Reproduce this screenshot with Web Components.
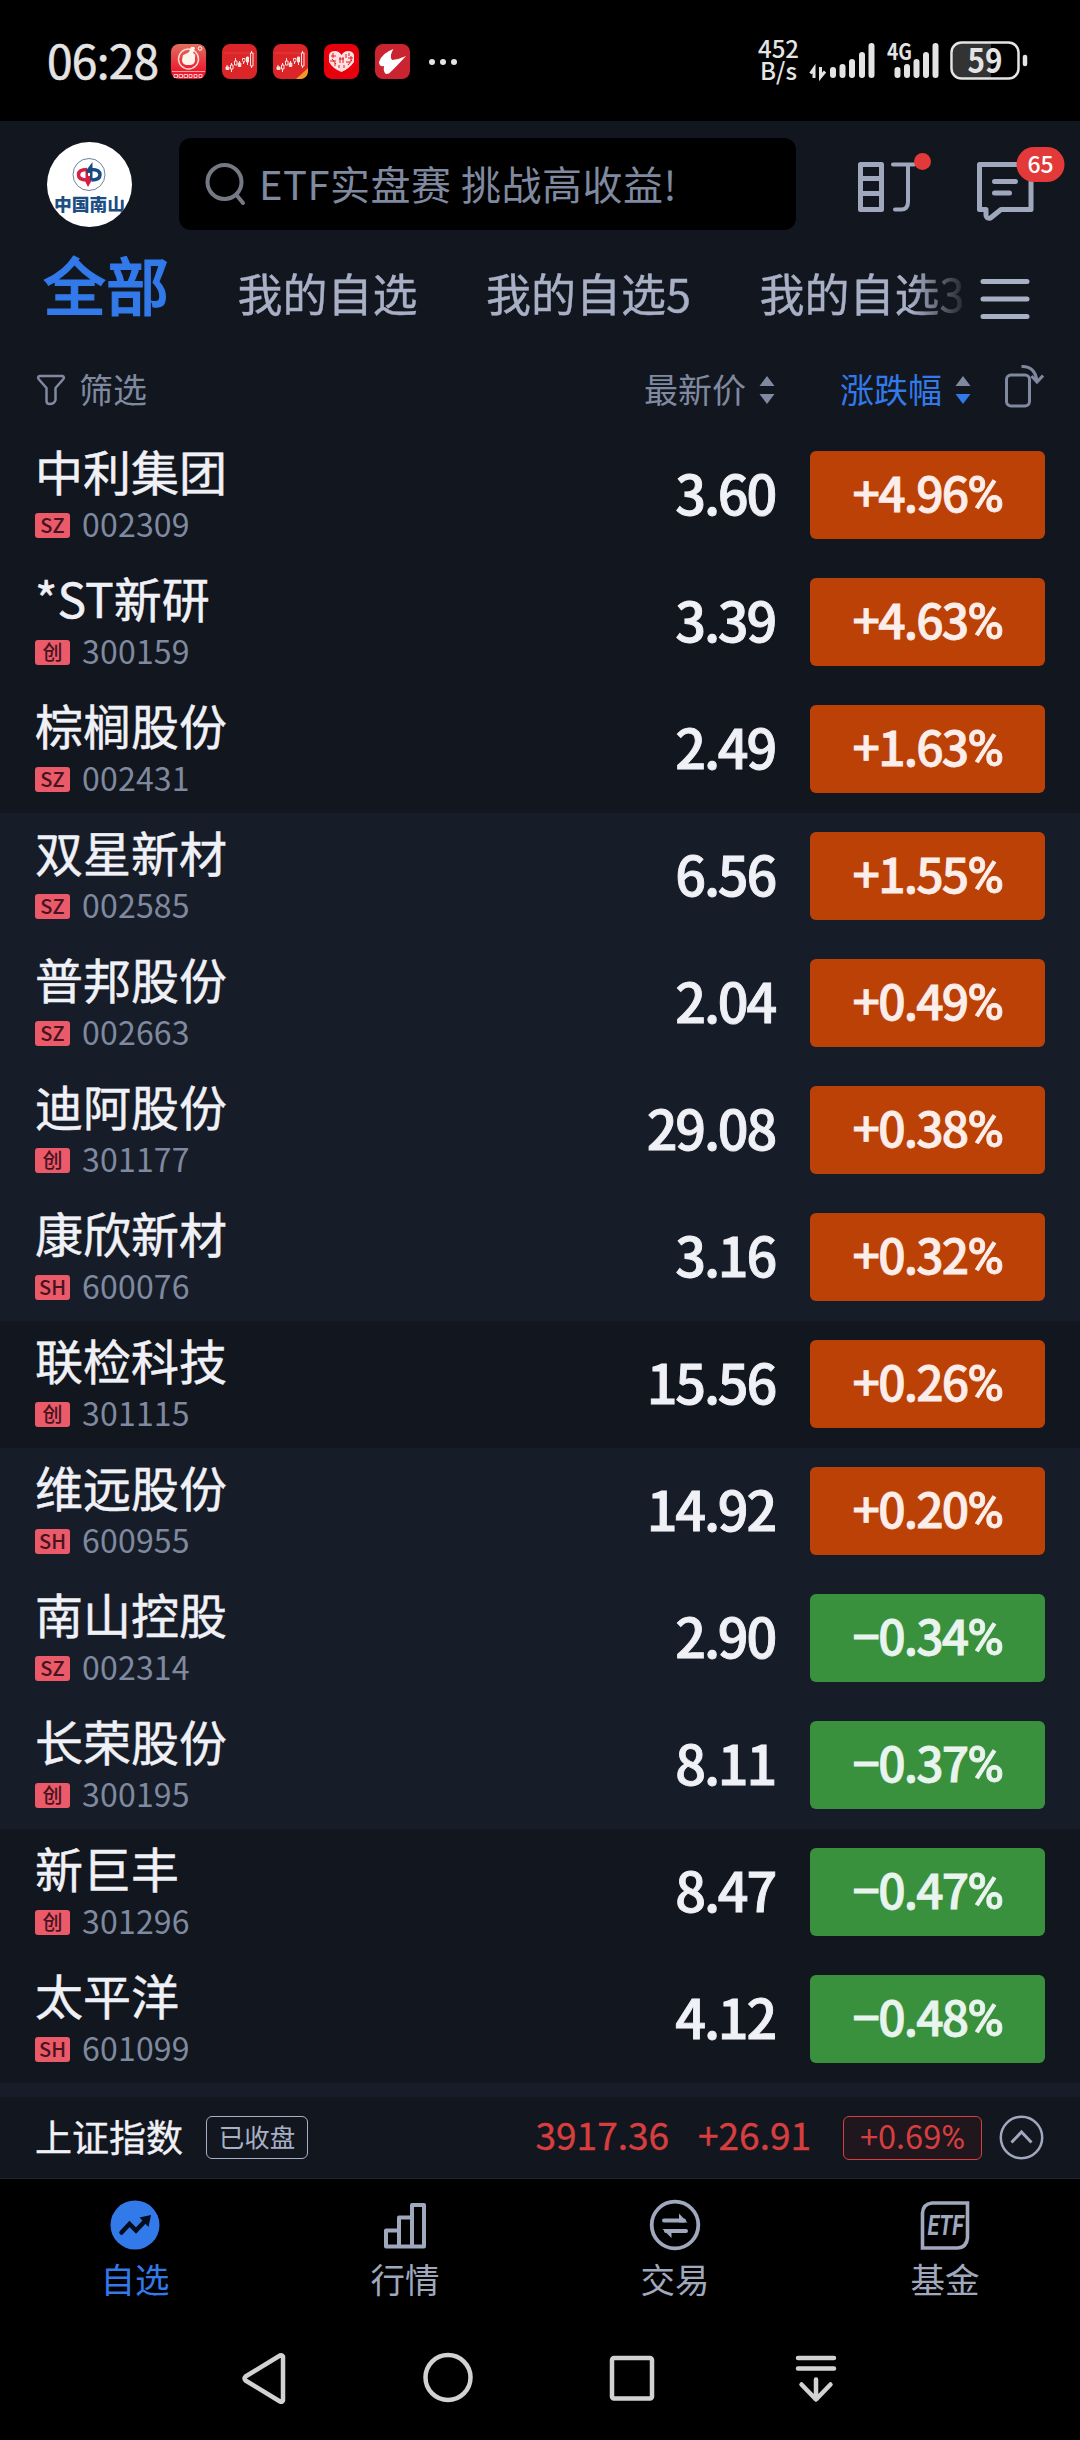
<!DOCTYPE html>
<html lang="zh-CN">
<head>
<meta charset="utf-8">
<title>自选</title>
<style>
  body {
    margin: 0;
    background: #000;
    font-family: "Noto Sans CJK SC", "Noto Sans", sans-serif;
  }
</style>
</head>
<body>
<watch-app></watch-app>

<script>
// attaches an open shadow root and fills it with the given markup
class BaseElement extends HTMLElement {
  constructor() {
    super();
    this.attachShadow({ mode: "open" });
  }

  connectedCallback() {
    const template = document.createElement("template");
    template.innerHTML = this.markup();
    this.shadowRoot.append(template.content.cloneNode(true));
  }
}

/* ---------- system status bar ---------- */
class StatusBar extends BaseElement {
  markup() {
    return `
      <style>
        :host {
          display: flex;
          align-items: flex-start;
          box-sizing: border-box;
          height: 121px;
          padding-left: 47px;
          background: #000;
          color: #e4e4e4;
        }
        .time {
          width: 124px;
          font-size: 46px;
          line-height: 46px;
          margin-top: 36px;
          letter-spacing: -0.7px;
          -webkit-text-stroke: 0.6px currentColor;
          white-space: nowrap;
        }
        .apps { margin-top: 43px; }
        .speed {
          margin: 37px 0 0 299px;
          width: 41px;
          font-size: 24px;
          line-height: 22px;
          text-align: center;
          font-weight: 500;
          white-space: nowrap;
        }
        .radio { margin: 36px 0 0 10px; overflow: visible; }
        svg { display: block; flex: none; }
        text { font-family: inherit; }
      </style>
      <div class="time">06:28</div>
      <svg class="apps" width="288" height="38" viewBox="0 0 288 38">
        <defs>
          <linearGradient id="thumb" x1="0" y1="0" x2="0" y2="1">
            <stop offset="0" stop-color="#e0705e"/><stop offset=".75" stop-color="#ee1c30"/>
          </linearGradient>
          <g id="candles" stroke="#f6e4e2" stroke-width="1" fill="none">
            <path d="M5 22v2M9.500 20v2M9.500 26v3M13.500 15v3M17.500 18v2M21.500 19v2M25.500 19v3M29.500 8v2M29.500 23v2"/>
            <path d="M8.500 22h2.500v4H8.500zM12.500 18h2.500v4h-2.500zM20.500 15.500h2.500v2l-1.200 2-1.300-2zM28.500 10h2.500v13h-2.500z"/>
            <path d="M4 24h3v2.500H4zM16.300 20h2.500v3.500h-2.500zM24.500 14h2v5h-2z" fill="#f6e4e2"/>
          </g>
        </defs>
        <rect x="0" y="1" width="35" height="35" rx="8" fill="url(#thumb)"/>
        <circle cx="17.500" cy="16" r="10" fill="none" stroke="#fbd9d0" stroke-width="1.500"/>
        <path d="M12 12q3-1 6-3l2-5q3-1 4 1l-2 5q3 1 2 4v4q-1 4-5 4h-4q-4-1-4-5z" fill="#fff4ec"/>
        <circle cx="29" cy="5.500" r="1.800" fill="none" stroke="#fff"/>
        <path d="M1 28.500h33" stroke="#fbc4bd" stroke-width=".8"/>
        <path d="M3 31.500h3.500v3H3zM8 31.500h3.500v3H8zM13 31.500h3.500v3H13zM18 31.500h3v3h-3zM23 31.500h3v3h-3zM28 31.500h3v3h-3z" fill="none" stroke="#ffd5d0" stroke-width=".9"/>
        <g transform="translate(51)"><rect y="1" width="35" height="35" rx="8" fill="#dc2528"/><path d="M2 10h31" stroke="#e65552" stroke-width=".6"/><use href="#candles"/></g>
        <g transform="translate(102)"><rect y="1" width="35" height="35" rx="8" fill="#dc2528"/><path d="M2 10h31" stroke="#e65552" stroke-width=".6"/><use href="#candles"/><path d="M35 25v4q-1 6-7 7h-5z" fill="#f29a22"/></g>
        <g transform="translate(153)">
          <rect y="1" width="35" height="35" rx="8" fill="#e8000d"/>
          <path d="M5 12q1-4 6-4 4 0 6.500 4Q20 8 24 8q5 0 6 4v7q-5 7-12.500 10Q9 26 5 19z" fill="#ffe2e1"/>
          <path d="M7 13h5M9 10v5M6 18h6M15 16h5M16 14v6M19 14v6M22 11v4M25 10v3M24 15h5M27 13v5M22 19h4M11 20v3M15 22v3M20 22v3M8 16l4 5M28 17l-4 5" stroke="#e8000d" stroke-width=".9"/>
        </g>
        <g transform="translate(204)">
          <rect y="1" width="35" height="35" rx="8" fill="#c9242f"/>
          <path d="M18.500 6Q7 10 4 19q0 5 5 4-1 6 2 8l3-.500Q20 25 31 13q-6 3-14 4-3-4 1.500-11z" fill="#fff"/>
        </g>
        <g fill="#e4e4e4"><circle cx="261" cy="19" r="3"/><circle cx="272" cy="19" r="3"/><circle cx="283" cy="19" r="3"/></g>
      </svg>
      <div class="speed">452<br>B/s</div>
      <svg class="radio" width="222" height="50" viewBox="0 0 222 50">
        <path d="M5 42V32.500L1.500 37.500M11.500 31v10l4.500-5.500" fill="none" stroke="#e4e4e4" stroke-width="3"/>
        <g stroke="#e4e4e4" stroke-width="6" stroke-linecap="round">
          <path d="M24 34v5M33.500 31v8M43 26v13M53 19v20M62.500 10v29"/>
          <path d="M88.500 34v5M98 31v8M107.500 26v13M117 19v20M126.500 10v29"/>
        </g>
        <text x="78" y="24" font-size="22.500" font-weight="700" fill="#e4e4e4" textLength="25" lengthAdjust="spacingAndGlyphs">4G</text>
        <path d="M153 7h29v35h-29q-9-1-9-9V16q0-8 9-9z" fill="#333"/>
        <rect x="142.500" y="6.500" width="67" height="36" rx="10" fill="none" stroke="#e4e4e4" stroke-width="2.500"/>
        <path d="M216 21v7" stroke="#e4e4e4" stroke-width="4.500" stroke-linecap="round"/>
        <text x="176" y="37" font-size="33" font-weight="700" fill="#e4e4e4" text-anchor="middle" textLength="35" lengthAdjust="spacingAndGlyphs">59</text>
      </svg>
    `;
  }
}
customElements.define("status-bar", StatusBar);

/* ---------- avatar, search field, shortcuts ---------- */
class SearchHeader extends BaseElement {
  markup() {
    return `
      <style>
        :host {
          display: flex;
          align-items: center;
          box-sizing: border-box;
          height: 126px;
          padding: 0 15px 0 47px;
        }
        .avatar { flex: none; width: 85px; height: 85px; margin-right: 47px; }
        .search {
          display: flex;
          align-items: center;
          width: 617px;
          height: 92px;
          border-radius: 12px;
          background: #000;
          color: #7f899f;
          font-size: 40px;
          letter-spacing: 0.5px;
          white-space: nowrap;
        }
        .search svg { margin: 0 13px 0 26px; }
        .search span { margin-top: -3px; }
        .watch { margin-left: 60px; }
        .message { margin-left: 43px; }
        svg { display: block; flex: none; }
      </style>
      <svg class="avatar" viewBox="0 0 85 85">
        <defs><clipPath id="round"><circle cx="42.500" cy="42.500" r="42.500"/></clipPath></defs>
        <g clip-path="url(#round)">
          <rect width="85" height="85" fill="#fff"/>
          <circle cx="42" cy="32.500" r="16" fill="none" stroke="#5d7391" stroke-width=".9"/>
          <path d="M40 27.500q-8.500 0-8.500 5.200t8.500 5.300" fill="none" stroke="#d71f45" stroke-width="3.500"/>
          <path d="M38.500 27h2.500v7h4v4l-4 7-2.500-5z" fill="#d71f45"/>
          <path d="M44.500 27.500q8.500 0 8.500 5.200T44.500 38" fill="none" stroke="#174b83" stroke-width="3.500"/>
          <path d="M45.500 38H43v-7h-3.500v-3l6-8z" fill="#174b83"/>
          <text x="42.500" y="68.500" font-size="17" font-weight="900" fill="#1c4e83" text-anchor="middle" textLength="71" lengthAdjust="spacingAndGlyphs">中国南山</text>
        </g>
      </svg>
      <div class="search">
        <svg width="41" height="44" viewBox="0 0 41 44" fill="none" stroke="#747983" stroke-width="4" stroke-linecap="round">
          <circle cx="19.500" cy="20" r="17"/><path d="M31.500 33l6.500 8"/>
        </svg>
        <span>ETF实盘赛 挑战高收益!</span>
      </div>
      <svg class="watch" width="76" height="76" viewBox="0 0 76 76">
        <g fill="none" stroke="#a0a8bd" stroke-width="5" stroke-linejoin="round" stroke-linecap="round">
          <path d="M4.500 18.500h21v45h-21zM4.500 32.500h21M4.500 47.500h21"/>
          <path d="M37 18.500h21M52 18.500V56q0 7.500-7 7.500h-6" stroke-width="4"/>
        </g>
        <circle cx="66.500" cy="15.500" r="8.500" fill="#e43939"/>
      </svg>
      <svg class="message" width="90" height="84" viewBox="0 0 90 84">
        <path d="M4.500 22.500h51.500v45H26L15.500 76q-5 1-4.500-4v-4.500H4.500z" fill="none" stroke="#a0a8bd" stroke-width="5" stroke-linejoin="round"/>
        <path d="M19.500 39.500h21M19.500 51h15" stroke="#a0a8bd" stroke-width="5" stroke-linecap="round"/>
        <rect x="41.500" y="5" width="48" height="35" rx="17.500" fill="#e43939"/>
        <text x="65.500" y="30.500" font-size="23" font-weight="500" fill="#fff" text-anchor="middle">65</text>
      </svg>
    `;
  }
}
customElements.define("search-header", SearchHeader);

/* ---------- watchlist groups ---------- */
class GroupTabs extends BaseElement {
  markup() {
    return `
      <style>
        :host {
          display: flex;
          align-items: center;
          height: 94px;
          padding-left: 43px;
          color: #a8b0c6;
        }
        .scroll {
          display: flex;
          align-items: center;
          gap: 68.500px;
          width: 921px;
          height: 94px;
          overflow: hidden;
          white-space: nowrap;
          font-size: 45px;
          line-height: 60px;
          -webkit-text-stroke: 0.4px currentColor;
          -webkit-mask-image: linear-gradient(90deg, #000 868px, transparent 928px);
          mask-image: linear-gradient(90deg, #000 868px, transparent 928px);
        }
        .scroll span { margin-top: -3px; }
        .scroll .active {
          color: #3279e9;
          font-size: 63px;
          font-weight: 500;
          -webkit-text-stroke: 1.2px currentColor;
          margin-top: -22px;
        }
        .menu { margin: 9px 0 0 15px; flex: none; }
      </style>
      <div class="scroll">
        <span class="active">全部</span>
        <span>我的自选</span>
        <span>我的自选5</span>
        <span>我的自选3</span>
      </div>
      <svg class="menu" width="52" height="42" viewBox="0 0 52 42" stroke="#a8b0c6" stroke-width="5" stroke-linecap="round">
        <path d="M4 3.500h44M4 21h44M4 38.500h44"/>
      </svg>
    `;
  }
}
customElements.define("group-tabs", GroupTabs);

/* ---------- column heads with sort arrows ---------- */
class SortLabel extends BaseElement {
  markup() {
    const active = this.hasAttribute("active");
    return `
      <style>
        :host {
          display: flex;
          align-items: center;
          gap: 13px;
          color: ${active ? "#3279e9" : "#7f899f"};
          font-size: 34px;
          white-space: nowrap;
        }
        span { margin-top: 4px; }
        svg { margin-top: 6px; }
      </style>
      <span><slot></slot></span>
      <svg width="16" height="28" viewBox="0 0 16 28">
        <path d="M8 0l7.500 10H.5z" fill="#7f899f"/>
        <path d="M8 28l7.500-10H.5z" fill="${active ? "#3279e9" : "#7f899f"}"/>
      </svg>
    `;
  }
}
customElements.define("sort-label", SortLabel);

class SortBar extends BaseElement {
  markup() {
    return `
      <style>
        :host {
          display: flex;
          align-items: center;
          box-sizing: border-box;
          height: 91px;
          padding: 0 36px;
          color: #7f899f;
          font-size: 34px;
          line-height: 50px;
        }
        .filter { display: flex; align-items: center; gap: 13px; flex: 1; }
        .filter svg { margin-top: 7px; }
        .filter span { margin-top: 4px; }
        .change { margin-left: 65px; }
        .rotate { margin: -2px 0 0 32px; }
      </style>
      <div class="filter">
        <svg width="30" height="32" viewBox="0 0 30 32" fill="none" stroke="#7f899f" stroke-width="2.500" stroke-linejoin="round">
          <path d="M3.500 2h23q2.500 1 .5 3.500L19.500 14v12q-1 4-6 4-3 0-3-3V14L3 5.500Q1 3 3.500 2z"/>
        </svg>
        <span>筛选</span>
      </div>
      <sort-label>最新价</sort-label>
      <sort-label class="change" active>涨跌幅</sort-label>
      <svg class="rotate" width="41" height="44" viewBox="0 0 41 44" fill="none" stroke="#7f899f" stroke-width="3">
        <rect x="3.500" y="11" width="23" height="31" rx="4.500"/>
        <path d="M18.500 2.500Q32 2 34 17M28.500 12l5.500 6 6-6.500"/>
      </svg>
    `;
  }
}
customElements.define("sort-bar", SortBar);

/* ---------- one quote ---------- */
class StockRow extends BaseElement {
  markup() {
    const { market, code, price, change } = this.dataset;
    const down = change.startsWith("−");
    return `
      <style>
        :host {
          display: grid;
          grid-template-columns: 1fr auto 235px;
          align-items: start;
          box-sizing: border-box;
          height: 127px;
          padding: 19px 35px 0;
          background: #12161e;
          color: #f0f1f6;
        }
        :host([raised]) { background: #171d28; }
        .name {
          font-size: 48px;
          line-height: 48px;
          margin-top: -5px;
          -webkit-text-stroke: 0.5px currentColor;
        }
        .sub {
          display: flex;
          align-items: center;
          gap: 12px;
          margin-top: 19px;
          height: 25px;
        }
        .market {
          width: 35px;
          height: 25px;
          border-radius: 3px;
          background: #ea5a69;
          color: #46131f;
          font-size: 20px;
          line-height: 23px;
          font-weight: 500;
          text-align: center;
        }
        .code {
          color: #7f899f;
          font-size: 32px;
          line-height: 25px;
          margin-top: -5px;
          letter-spacing: 0.2px;
        }
        .price {
          font-size: 54px;
          line-height: 88px;
          font-weight: 500;
          letter-spacing: -2.200px;
          -webkit-text-stroke: 0.9px currentColor;
          margin: -3px 35px 0 0;
        }
        .change {
          height: 88px;
          border-radius: 6px;
          background: ${down ? "#39903d" : "#bb4106"};
          color: ${down ? "#eaf4ee" : "#fbeeea"};
          font-size: 48px;
          line-height: 80px;
          font-weight: 500;
          letter-spacing: -1.800px;
          -webkit-text-stroke: 0.8px currentColor;
          text-align: center;
        }
        /* Roboto has the narrower percent sign */
        .unit { font-family: Roboto, sans-serif; font-size: 50px; line-height: 1; }
      </style>
      <div>
        <div class="name"><slot></slot></div>
        <div class="sub">
          <span class="market">${market}</span>
          <span class="code">${code}</span>
        </div>
      </div>
      <div class="price">${price}</div>
      <div class="change">${change}<span class="unit">%</span></div>
    `;
  }
}
customElements.define("stock-row", StockRow);

/* ---------- index summary ---------- */
class IndexBar extends BaseElement {
  markup() {
    return `
      <style>
        :host {
          display: flex;
          align-items: center;
          box-sizing: border-box;
          height: 82px;
          padding: 0 36px 0 35px;
          border-bottom: 1px solid #22262e;
          background: #12161e;
          color: #f0f1f6;
          font-size: 37px;
          line-height: 42px;
          white-space: nowrap;
        }
        .name {
          width: 171px;
          margin-top: -3px;
          -webkit-text-stroke: 0.4px currentColor;
        }
        .state {
          box-sizing: border-box;
          width: 102px;
          height: 43px;
          border: 1px solid #a8b0c6;
          border-radius: 6px;
          color: #a8b0c6;
          font-size: 25.500px;
          line-height: 38px;
          text-align: center;
        }
        .value, .diff {
          color: #d83e3e;
          -webkit-text-stroke: 0.4px currentColor;
        }
        .value { margin: -7px 0 0 auto; }
        .diff { margin: -7px 0 0 29px; }
        .rate {
          box-sizing: border-box;
          width: 139px;
          height: 44px;
          margin: 0 17px 0 32px;
          border: 1px solid #d83e3e;
          border-radius: 6px;
          background: #20171e;
          color: #d83e3e;
          font-size: 32.500px;
          line-height: 36px;
          text-align: center;
        }
        .unit { font-family: Roboto, sans-serif; }
        svg { flex: none; }
      </style>
      <span class="name">上证指数</span>
      <span class="state">已收盘</span>
      <span class="value">3917.36</span>
      <span class="diff">+26.91</span>
      <span class="rate">+0.69<span class="unit">%</span></span>
      <svg width="45" height="45" viewBox="0 0 45 45" fill="none" stroke="#a0a8bd" stroke-width="2.500">
        <circle cx="22.500" cy="22.500" r="20.700"/>
        <path d="M12.500 27.500l10-10.500 10 10.500" stroke-width="3"/>
      </svg>
    `;
  }
}
customElements.define("index-bar", IndexBar);

/* ---------- app tab bar ---------- */
class TabItem extends BaseElement {
  markup() {
    return `
      <style>
        :host {
          flex: 1;
          display: flex;
          flex-direction: column;
          align-items: center;
          padding-top: 20px;
          color: #a0a8bd;
          font-size: 34.500px;
          line-height: 50px;
        }
        :host([active]) { color: #3279e9; }
        .label { margin-top: 2px; }
        ::slotted(svg) { display: block; }
      </style>
      <slot name="icon"></slot>
      <span class="label"><slot></slot></span>
    `;
  }
}
customElements.define("tab-item", TabItem);

class TabBar extends BaseElement {
  markup() {
    return `
      <style>
        :host { display: flex; height: 146px; background: #000; }
      </style>
      <tab-item active>
        <svg slot="icon" width="52" height="52" viewBox="0 0 52 52">
          <circle cx="26" cy="26" r="24.500" fill="#3279e9"/>
          <path d="M12.500 33.500l8-8.500 6.500 6.500L37 21" fill="none" stroke="#050c1c" stroke-width="4.500" stroke-linecap="round"/>
          <path d="M30.500 18.500L42 16l-2.500 12z" fill="#050c1c"/>
        </svg>自选
      </tab-item>
      <tab-item>
        <svg slot="icon" width="52" height="52" viewBox="0 0 52 52" fill="none" stroke="#a0a8bd" stroke-width="4" stroke-linejoin="round">
          <path d="M7 47.500V31.500h13V18.500h13V6h12v41.500zM20 31.500v16M33 18.500v29"/>
        </svg>行情
      </tab-item>
      <tab-item>
        <svg slot="icon" width="52" height="52" viewBox="0 0 52 52">
          <circle cx="26" cy="26" r="23.300" fill="none" stroke="#a0a8bd" stroke-width="3.800"/>
          <path d="M15 21.500h20M17 32h20" stroke="#a0a8bd" stroke-width="4" stroke-linecap="round"/>
          <path d="M30 14.500l8.500 9H30zM22.500 39L13.500 30h9z" fill="#a0a8bd"/>
        </svg>交易
      </tab-item>
      <tab-item>
        <svg slot="icon" width="52" height="52" viewBox="0 0 52 52">
          <path d="M13 4h35.500v35q-1 9.500-10 10H3.500V14Q4 5 13 4z" fill="none" stroke="#a0a8bd" stroke-width="3.600"/>
          <text x="26.500" y="36" font-size="27" font-family="Roboto, sans-serif" font-weight="700" font-style="italic" fill="#a0a8bd" text-anchor="middle" textLength="36" lengthAdjust="spacingAndGlyphs">ETF</text>
        </svg>基金
      </tab-item>
    `;
  }
}
customElements.define("tab-bar", TabBar);

/* ---------- system navigation keys ---------- */
class NavKeys extends BaseElement {
  markup() {
    return `
      <style>
        :host {
          display: flex;
          justify-content: center;
          gap: 132px;
          box-sizing: border-box;
          height: 115px;
          padding: 27px 1px 0 0;
          background: #000;
        }
        svg { fill: none; stroke: #d2d2d2; stroke-width: 4.5; stroke-linejoin: round; stroke-linecap: round; }
      </style>
      <svg width="52" height="52" viewBox="0 0 52 52"><path d="M45 4.500v44q-1 2-3 1L7.500 28.500q-2-2 0-4L42 3.500q2-.5 3 1z"/></svg>
      <svg width="52" height="52" viewBox="0 0 52 52"><circle cx="26" cy="25.500" r="22.500"/></svg>
      <svg width="52" height="52" viewBox="0 0 52 52"><rect x="6" y="6" width="40" height="40.500" rx="2"/></svg>
      <svg width="52" height="52" viewBox="0 0 52 52"><path d="M8 6h36M8 16.500h36M26 27.500V47M11.500 32.500L26 47.500l14.500-15"/></svg>
    `;
  }
}
customElements.define("nav-keys", NavKeys);

/* ---------- whole screen ---------- */
const stocks = [
  { name: "中利集团", market: "SZ", code: "002309", price: "3.60", change: "+4.96" },
  { name: "*ST新研", market: "创", code: "300159", price: "3.39", change: "+4.63" },
  { name: "棕榈股份", market: "SZ", code: "002431", price: "2.49", change: "+1.63" },
  { name: "双星新材", market: "SZ", code: "002585", price: "6.56", change: "+1.55", raised: true },
  { name: "普邦股份", market: "SZ", code: "002663", price: "2.04", change: "+0.49", raised: true },
  { name: "迪阿股份", market: "创", code: "301177", price: "29.08", change: "+0.38", raised: true },
  { name: "康欣新材", market: "SH", code: "600076", price: "3.16", change: "+0.32", raised: true },
  { name: "联检科技", market: "创", code: "301115", price: "15.56", change: "+0.26" },
  { name: "维远股份", market: "SH", code: "600955", price: "14.92", change: "+0.20", raised: true },
  { name: "南山控股", market: "SZ", code: "002314", price: "2.90", change: "−0.34", raised: true },
  { name: "长荣股份", market: "创", code: "300195", price: "8.11", change: "−0.37", raised: true },
  { name: "新巨丰", market: "创", code: "301296", price: "8.47", change: "−0.47" },
  { name: "太平洋", market: "SH", code: "601099", price: "4.12", change: "−0.48" },
];

class WatchApp extends BaseElement {
  markup() {
    const rows = stocks
      .map(
        (s) =>
          `<stock-row data-market="${s.market}" data-code="${s.code}" data-price="${s.price}" data-change="${s.change}" ${s.raised ? "raised" : ""}>${s.name}</stock-row>`
      )
      .join("");
    return `
      <style>
        :host {
          display: flex;
          flex-direction: column;
          width: 1080px;
          height: 2440px;
          overflow: hidden;
          background: #12161e;
        }
        :host > * { flex: none; }
        /* top edge of the row hidden behind the index bar */
        .list { height: 1665px; background: #171d28; }
      </style>
      <status-bar></status-bar>
      <search-header></search-header>
      <group-tabs></group-tabs>
      <sort-bar></sort-bar>
      <div class="list">${rows}</div>
      <index-bar></index-bar>
      <tab-bar></tab-bar>
      <nav-keys></nav-keys>
    `;
  }
}
customElements.define("watch-app", WatchApp);
</script>
</body>
</html>
